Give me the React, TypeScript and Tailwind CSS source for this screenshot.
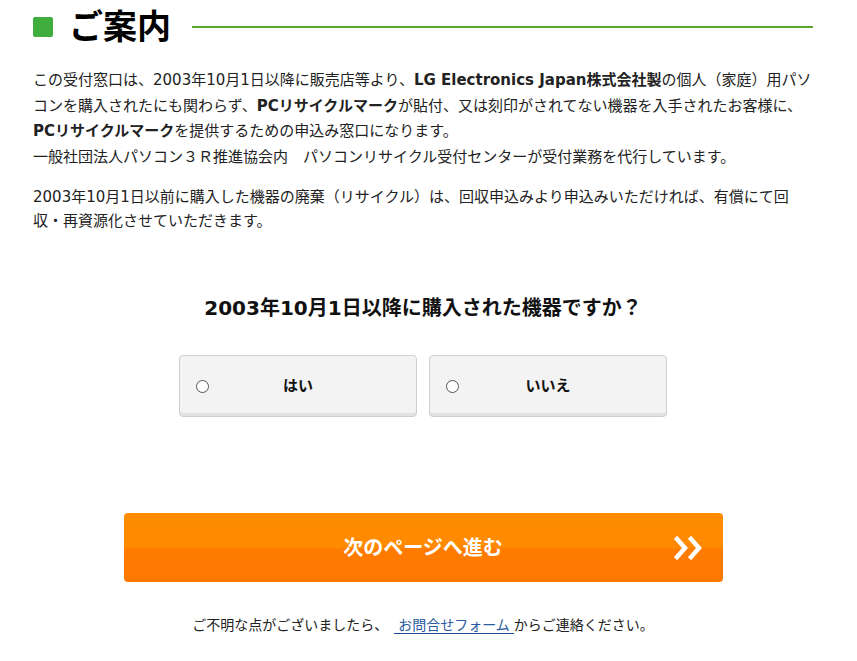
import { useState } from "react";

const font = {
  fontFamily: '"DejaVu Sans", "Noto Sans CJK JP", sans-serif',
};

const ChoiceBox = ({
  label,
  checked,
  onSelect,
}: {
  label: string;
  checked: boolean;
  onSelect: () => void;
}) => (
  <label
    onClick={onSelect}
    className="relative flex h-[62px] w-[238px] cursor-pointer items-center rounded-[4px] border border-[#cfcfcf] bg-[#f3f3f3] shadow-[inset_0_-3px_0_#e2e2e2]"
  >
    <span className="ml-[16px] flex h-[13px] w-[13px] items-center justify-center rounded-full border border-[#555] bg-white">
      {checked && <span className="h-[7px] w-[7px] rounded-full bg-[#333]" />}
    </span>
    <span className="pointer-events-none absolute left-0 right-0 text-center text-[15px] font-bold text-[#111]">
      {label}
    </span>
  </label>
);

export default function App() {
  const [answer, setAnswer] = useState<"yes" | "no" | null>(null);

  return (
    <div className="min-h-[661px] bg-white text-[#222]" style={font}>
      <div className="ml-[33px] w-[780px] pt-[7px]">
        <h2 className="flex h-[40px] items-center">
          <span className="h-[20px] w-[20px] rounded-[2px] bg-[#3fae3f]" />
          <span className="ml-[16px] text-[34px] font-bold leading-none text-black">
            ご案内
          </span>
          <span className="ml-[21px] h-[2px] flex-1 bg-[#5ba52a]" />
        </h2>

        <p className="mt-[21px] text-[15px] leading-[25.5px]">
          この受付窓口は、2003年10月1日以降に販売店等より、
          <b>LG Electronics Japan株式会社製</b>
          の個人（家庭）用パソコンを購入されたにも関わらず、
          <b>PCリサイクルマーク</b>
          が貼付、又は刻印がされてない機器を入手されたお客様に、
          <br />
          <b>PCリサイクルマーク</b>
          を提供するための申込み窓口になります。
          <br />
          一般社団法人パソコン３Ｒ推進協会内　パソコンリサイクル受付センターが受付業務を代行しています。
        </p>

        <p className="mt-[15px] text-[15px] leading-[24px]">
          2003年10月1日以前に購入した機器の廃棄（リサイクル）は、回収申込みより申込みいただければ、有償にて回収・再資源化させていただきます。
        </p>

        <h3 className="mt-[61px] text-center text-[20px] font-bold leading-[28px] text-[#111]">
          2003年10月1日以降に購入された機器ですか？
        </h3>

        <div className="mt-[33px] flex justify-center gap-[12px]">
          <ChoiceBox
            label="はい"
            checked={answer === "yes"}
            onSelect={() => setAnswer("yes")}
          />
          <ChoiceBox
            label="いいえ"
            checked={answer === "no"}
            onSelect={() => setAnswer("no")}
          />
        </div>

        <div className="mt-[96px] flex justify-center">
          <button className="relative flex h-[69px] w-[599px] items-center justify-center rounded-[4px] bg-[linear-gradient(to_bottom,#ff8c00_0%,#ff8a00_50%,#ff7b00_52%,#ff7800_100%)] text-[20px] font-bold text-white">
            次のページへ進む
            <svg
              className="absolute right-[20px] top-1/2 -translate-y-1/2"
              width="29"
              height="24"
              viewBox="0 0 29 24"
              fill="none"
              stroke="white"
              strokeWidth="4.5"
              strokeLinecap="square"
            >
              <path d="M3 3 L11 12 L3 21" />
              <path d="M17 3 L25 12 L17 21" />
            </svg>
          </button>
        </div>

        <p className="mt-[31px] text-center text-[14px] leading-[24px]">
          ご不明な点がございましたら、
          <a
            href="#"
            className="ml-[6px] border-b border-[#1d4b8f] px-[4px] text-[#2a5a9e]"
          >
            お問合せフォーム
          </a>
          からご連絡ください。
        </p>
      </div>
    </div>
  );
}
